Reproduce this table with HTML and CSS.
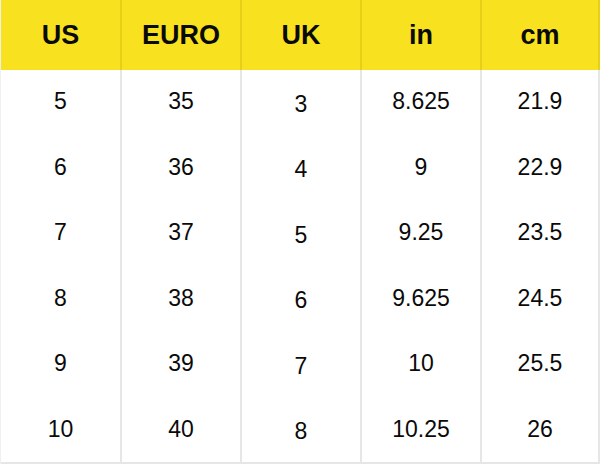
FILE: index.html
```html
<!DOCTYPE html>
<html>
<head>
<meta charset="utf-8">
<link rel="stylesheet" href="styles.css">
</head>
<body>
<div class="chart">
  <div class="h">US</div><div class="h">EURO</div><div class="h">UK</div><div class="h">in</div><div class="h">cm</div>
  <div class="c">5</div><div class="c">35</div><div class="c uk">3</div><div class="c">8.625</div><div class="c">21.9</div>
  <div class="c">6</div><div class="c">36</div><div class="c uk">4</div><div class="c">9</div><div class="c">22.9</div>
  <div class="c">7</div><div class="c">37</div><div class="c uk">5</div><div class="c">9.25</div><div class="c">23.5</div>
  <div class="c">8</div><div class="c">38</div><div class="c uk">6</div><div class="c">9.625</div><div class="c">24.5</div>
  <div class="c">9</div><div class="c">39</div><div class="c uk">7</div><div class="c">10</div><div class="c">25.5</div>
  <div class="c last">10</div><div class="c last">40</div><div class="c uk last">8</div><div class="c last">10.25</div><div class="c last">26</div>
</div>
</body>
</html>
```

FILE: styles.css
```css
html, body {
  margin: 0;
  padding: 0;
  background: #ffffff;
}
.chart {
  display: grid;
  grid-template-columns: 121px 120px 120px 120px 118px;
  grid-template-rows: 70px repeat(5, 65.5px) 66px;
  width: 599px;
  font-family: "Liberation Sans", Arial, sans-serif;
  color: #0a0a0a;
  border-left: 1px solid #f0f0f0;
  box-sizing: border-box;
}
.h, .c {
  display: flex;
  align-items: center;
  justify-content: center;
  box-sizing: border-box;
}
.h {
  background: #f8e21f;
  font-size: 27px;
  font-weight: bold;
  border-right: 2px solid #e6d01a;
}
.c {
  font-size: 23px;
  border-right: 2px solid #e6e6e6;
  padding-bottom: 2px;
}
.c.uk {
  padding-top: 3px;
  padding-bottom: 0;
}
.c.last {
  border-bottom: 2px solid #e6e6e6;
  padding-bottom: 1px;
}
.c.uk.last {
  padding-top: 3px;
  padding-bottom: 0;
}
```
